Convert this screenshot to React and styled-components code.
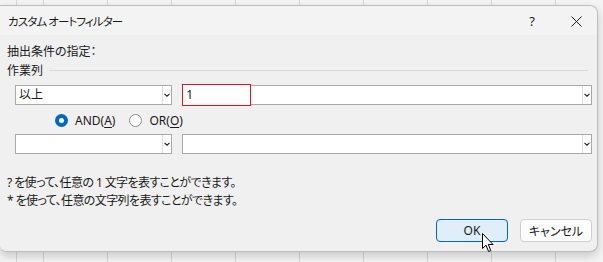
import React from "react";
import styled, { createGlobalStyle } from "styled-components";

const Global = createGlobalStyle`
  html, body { margin: 0; padding: 0; }
  body {
    width: 603px;
    height: 262px;
    overflow: hidden;
    font-family: "Noto Sans", "Noto Sans CJK JP", sans-serif;
    font-feature-settings: "palt";
    color: #1a1a1a;
    background-color: #f4f4f4;
    background-image: repeating-linear-gradient(
      to right,
      #d6d6d6 0px,
      #d6d6d6 1px,
      transparent 1px,
      transparent 64px
    );
    background-position: 43px 0;
  }
`;

const Dialog = styled.div`
  box-sizing: border-box;
  margin-top: 5px;
  width: 598px;
  height: 247px;
  background: #f0f0f0;
  border: 1px solid #bdbdbd;
  border-left: none;
  border-radius: 0 8px 8px 6px;
  box-shadow: 0 4px 10px rgba(0, 0, 0, 0.18);
  display: flex;
  flex-direction: column;
  position: relative;
`;

const TitleBar = styled.div`
  height: 29px;
  display: flex;
  align-items: center;
  padding-left: 8px;
  padding-top: 1px;
  box-sizing: border-box;
  background: #f3f3f3;
  border-radius: 0 8px 0 0;
  color: #1a1a1a;
`;

const Title = styled.div`
  flex: 1;
  font-size: 11.5px;
  letter-spacing: -0.9px;
`;

const TitleButton = styled.div`
  width: ${(p) => p.$w}px;
  margin-right: ${(p) => p.$mr || 0}px;
  display: flex;
  justify-content: center;
  align-items: center;
  font-size: 13px;
  color: #1a1a1a;
`;

const Body = styled.div`
  padding: 8px 5px 0 7px;
  display: flex;
  flex-direction: column;
  font-size: 12px;
`;

const Line = styled.div`
  height: 18px;
  line-height: 18px;
  white-space: pre;
  letter-spacing: ${(p) => p.$ls || 0}px;
  margin-top: ${(p) => p.$mt || 0}px;
`;

const GroupHeader = styled.div`
  height: 18px;
  display: flex;
  align-items: center;
  gap: 6px;
  &::after {
    content: "";
    flex: 1;
    height: 1px;
    background: #d9d9d9;
    margin-right: 4px;
  }
`;

const Row = styled.div`
  display: flex;
  align-items: center;
  height: ${(p) => p.$h}px;
  margin-top: ${(p) => p.$mt}px;
  padding-left: 8px;
  gap: ${(p) => p.$gap || 0}px;
`;

const Combo = styled.div`
  position: relative;
  box-sizing: border-box;
  width: ${(p) => p.$w}px;
  height: 20px;
  background: #fff;
  border: 1px solid #a8a8ad;
  display: flex;
  align-items: stretch;
`;

const ComboText = styled.div`
  flex: 1;
  padding-left: 3px;
  line-height: 18px;
  font-size: 12px;
`;

const DropButton = styled.div`
  width: 8px;
  border-left: 1px solid #dcdcdc;
  display: flex;
  align-items: center;
  justify-content: center;
`;

const FocusBox = styled.div`
  position: absolute;
  left: -1px;
  top: -2px;
  width: 69px;
  height: 22px;
  box-sizing: border-box;
  border: 1px solid #e81123;
  background: #fff;
  padding-left: 3px;
  line-height: 20px;
  font-size: 12px;
`;

const RadioGroup = styled.div`
  display: flex;
  align-items: center;
  padding-left: 40px;
  gap: 14px;
`;

const RadioItem = styled.label`
  display: flex;
  align-items: center;
  gap: 7px;
  font-size: 12px;
`;

const RadioCircle = styled.span`
  box-sizing: border-box;
  width: 13px;
  height: 13px;
  border-radius: 50%;
  display: inline-flex;
  align-items: center;
  justify-content: center;
  background: ${(p) => (p.$on ? "#0067c0" : "#fff")};
  border: ${(p) => (p.$on ? "none" : "1px solid #8a8a8a")};
  &::after {
    content: "";
    display: ${(p) => (p.$on ? "block" : "none")};
    width: 5px;
    height: 5px;
    border-radius: 50%;
    background: #fff;
  }
`;

const U = styled.span`
  text-decoration: underline;
  text-underline-offset: 2px;
`;

const ButtonRow = styled.div`
  display: flex;
  justify-content: flex-end;
  gap: 12px;
  margin-top: 9px;
`;

const Button = styled.div`
  box-sizing: border-box;
  width: 72px;
  height: 23px;
  border-radius: 4px;
  display: flex;
  align-items: center;
  justify-content: center;
  font-size: 12px;
  color: #1a1a1a;
  background: ${(p) => (p.$primary ? "#e0eef9" : "#fdfdfd")};
  border: 1px solid ${(p) => (p.$primary ? "#0067c0" : "#d0d0d0")};
`;

const Cursor = styled.svg`
  position: absolute;
  left: 482px;
  top: 227px;
`;

const Chevron = () => (
  <svg width="6" height="4" viewBox="0 0 6 4">
    <path d="M0.5 0.8 L3 3.2 L5.5 0.8" fill="none" stroke="#222" strokeWidth="1.1" />
  </svg>
);

export default function App() {
  return (
    <>
      <Global />
      <Dialog>
        <TitleBar>
          <Title>カスタム オートフィルター</Title>
          <TitleButton $w={20} $mr={19}>?</TitleButton>
          <TitleButton $w={30} $mr={6}>
            <svg width="11" height="11" viewBox="0 0 11 11">
              <path d="M0.5 0.5 L10.5 10.5 M10.5 0.5 L0.5 10.5" stroke="#1a1a1a" strokeWidth="1" />
            </svg>
          </TitleButton>
        </TitleBar>
        <Body>
          <Line>抽出条件の指定：</Line>
          <GroupHeader>作業列</GroupHeader>
          <Row $h={22} $mt={5} $gap={10}>
            <Combo $w={158}>
              <ComboText>以上</ComboText>
              <DropButton>
                <Chevron />
              </DropButton>
            </Combo>
            <Combo $w={412}>
              <ComboText />
              <DropButton>
                <Chevron />
              </DropButton>
              <FocusBox>1</FocusBox>
            </Combo>
          </Row>
          <Row $h={20} $mt={4}>
            <RadioGroup>
              <RadioItem>
                <RadioCircle $on />
                <span>
                  AND(<U>A</U>)
                </span>
              </RadioItem>
              <RadioItem>
                <RadioCircle />
                <span>
                  OR(<U>O</U>)
                </span>
              </RadioItem>
            </RadioGroup>
          </Row>
          <Row $h={20} $mt={4} $gap={10}>
            <Combo $w={158}>
              <ComboText />
              <DropButton>
                <Chevron />
              </DropButton>
            </Combo>
            <Combo $w={412}>
              <ComboText />
              <DropButton>
                <Chevron />
              </DropButton>
            </Combo>
          </Row>
          <Line $mt={20} $ls={-0.6}>? を使って、任意の 1 文字を表すことができます。</Line>
          <Line $ls={-0.6}>* を使って、任意の文字列を表すことができます。</Line>
          <ButtonRow>
            <Button $primary>OK</Button>
            <Button>キャンセル</Button>
          </ButtonRow>
        </Body>
        <Cursor width="13" height="20" viewBox="0 0 13 20">
          <path
            d="M0.5 0.5 L0.5 15.5 L4 12.2 L6.6 18.5 L8.8 17.6 L6.3 11.5 L11 11.5 Z"
            fill="#fff"
            stroke="#000"
            strokeWidth="1"
            strokeLinejoin="round"
          />
        </Cursor>
      </Dialog>
    </>
  );
}
